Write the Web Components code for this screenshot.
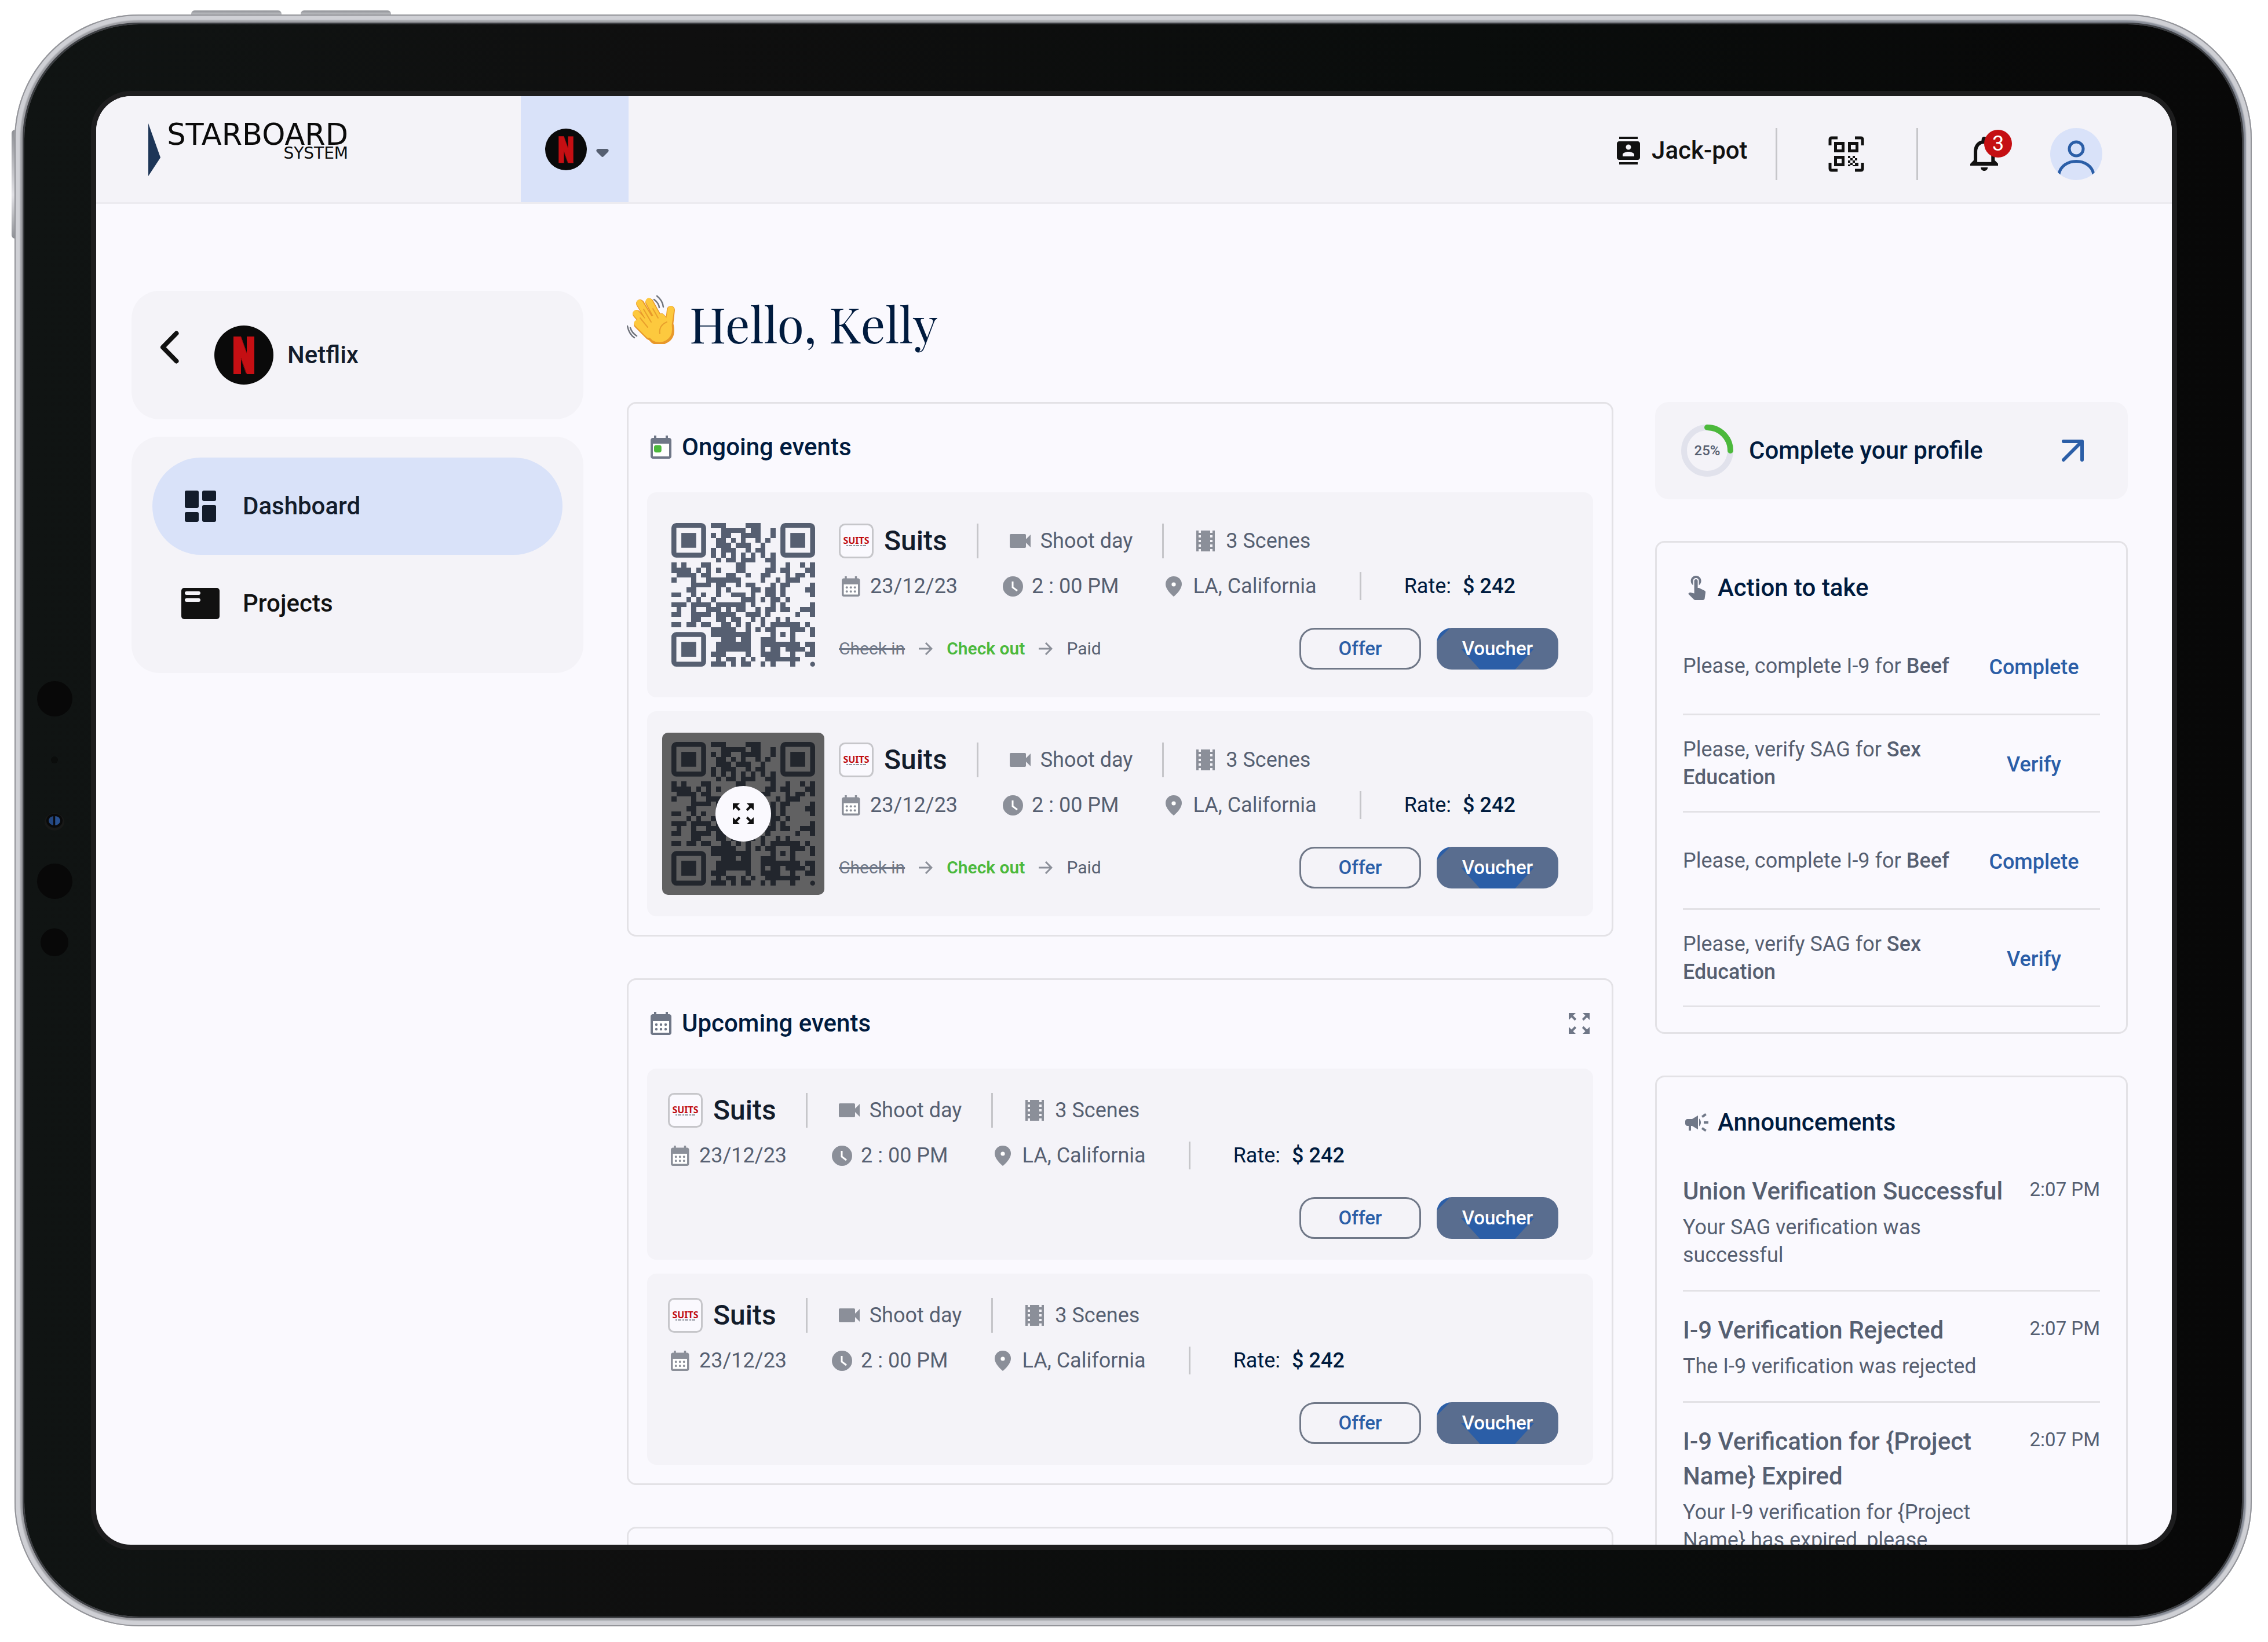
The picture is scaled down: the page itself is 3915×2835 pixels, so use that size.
<!DOCTYPE html>
<html lang="en">
<head>
<meta charset="utf-8">
<title>Starboard System - Dashboard</title>
<style>
  :root {
    --surface: #faf9fe;
    --surface-low: #f4f3f8;
    --outline: #e3e2e6;
    --divider: #c6c6ca;
    --accent: #2b5ea7;
    --accent-soft: #d9e2f9;
    --navy: #001b3e;
    --ink: #131c2b;
    --text: #565f71;
    --muted: #6f7787;
    --icon: #8b8f99;
    --green: #4cb93c;
  }
  html, body {
    height: 100%;
  }
  body {
    margin: 0;
    background: #fff;
    color: var(--text);
    font: 36px/48px Roboto, "Liberation Sans", sans-serif;
  }
</style>
</head>
<body>

<tablet-frame>
  <app-header slot="header"></app-header>
  <app-layout>
    <side-nav slot="nav"></side-nav>

    <h-greeting slot="greeting">Hello, Kelly</h-greeting>

    <app-panel slot="main" icon="today" wide>
      <span slot="title">Ongoing events</span>
      <event-card status>
        <qr-code slot="code"></qr-code>
      </event-card>
      <event-card status>
        <qr-code slot="code" covered></qr-code>
      </event-card>
    </app-panel>

    <app-panel slot="main" icon="calendar" wide expandable>
      <span slot="title">Upcoming events</span>
      <event-card></event-card>
      <event-card></event-card>
    </app-panel>

    <app-panel slot="main" wide></app-panel>

    <profile-progress slot="aside" value="25">Complete your profile</profile-progress>

    <app-panel slot="aside" icon="touch">
      <span slot="title">Action to take</span>
      <action-row action="Complete">Please, complete I-9 for <b>Beef</b></action-row>
      <action-row action="Verify">Please, verify SAG for <b>Sex Education</b></action-row>
      <action-row action="Complete">Please, complete I-9 for <b>Beef</b></action-row>
      <action-row action="Verify">Please, verify SAG for <b>Sex Education</b></action-row>
    </app-panel>

    <app-panel slot="aside" icon="campaign">
      <span slot="title">Announcements</span>
      <news-item time="2:07 PM">
        <span slot="title">Union Verification Successful</span>
        Your SAG verification was successful
      </news-item>
      <news-item time="2:07 PM">
        <span slot="title">I-9 Verification Rejected</span>
        The I-9 verification was rejected
      </news-item>
      <news-item time="2:07 PM">
        <span slot="title">I-9 Verification for {Project Name} Expired</span>
        Your I-9 verification for {Project Name} has expired, please
      </news-item>
    </app-panel>
  </app-layout>
</tablet-frame>

<script>
const calendarBody = 'M19 3h-1V1h-2v2H8V1H6v2H5c-1.1 0-2 .9-2 2v14c0 1.100.9 2 2 2h14c1.100 0 2-.9 2-2V5c0-1.100-.9-2-2-2z'

// name: [viewBox, markup]
const icons = {
  contacts: ['2 0 20 24', '<path d="M20 0H4v2h16V0zM4 24h16v-2H4v2zM20 4H4c-1.100 0-2 .9-2 2v12c0 1.100.9 2 2 2h16c1.100 0 2-.9 2-2V6c0-1.100-.9-2-2-2zm-8 2.750c1.240 0 2.250 1.010 2.250 2.250s-1.010 2.250-2.250 2.250S9.750 10.240 9.750 9 10.760 6.750 12 6.750zM17 17H7v-1.500c0-1.670 3.330-2.500 5-2.500s5 .83 5 2.500V17z"/>'],
  scan: ['0 0 62 62', '<g fill="none" stroke="currentColor" stroke-width="5"><path d="M3 16V6q0-3 3-3h10M46 3h10q3 0 3 3v10M59 46v10q0 3-3 3H46M16 59H6q-3 0-3-3V46"/><path d="M12.500 12.500h13v13h-13zM36.500 12.500h13v13h-13zM12.500 36.500h13v13h-13z"/></g><path d="M34 34h4v4h-4zM42 34h4v4h-4zM38 38h4v4h-4zM46 38h4v4h-4zM34 42h4v4h-4zM42 42h4v4h-4zM38 46h4v4h-4zM46 46h6v6h-6zM42 50h4v2h-4zM34 49h4v3h-4z"/>'],
  bell: ['4 2.500 16 19.500', '<path d="M12 22c1.100 0 2-.9 2-2h-4c0 1.100.9 2 2 2zm6-6v-5c0-3.070-1.630-5.640-4.500-6.320V4c0-.83-.67-1.500-1.500-1.500s-1.500.67-1.500 1.500v.68C7.640 5.360 6 7.920 6 11v5l-2 2v1h16v-1l-2-2zm-2 1H8v-6c0-2.480 1.510-4.500 4-4.500s4 2.020 4 4.500v6z"/>'],
  person: ['0 0 90 90', '<g fill="none" stroke="currentColor" stroke-width="5"><circle cx="45" cy="36" r="12"/><path d="M15 80C20 50 70 50 75 80"/></g>'],
  caret: ['0 0 22 14', '<path d="M3 0h16q4 1 2 5l-8 8q-2 2-4 0L1 5q-2-4 2-5z"/>'],
  back: ['0 0 33 57', '<path d="M28.500 4.500L5 28.500l23.500 24" fill="none" stroke="currentColor" stroke-width="8" stroke-linecap="round" stroke-linejoin="round"/>'],
  dashboard: ['0 0 66 54', '<rect x="6" width="24" height="30" rx="3"/><rect x="36" width="24" height="18" rx="3"/><rect x="6" y="37" width="24" height="17" rx="3"/><rect x="36" y="25" width="24" height="29" rx="3"/>'],
  projects: ['0 0 66 54', '<rect width="66" height="54" rx="5"/><path d="M9 9h21M9 21h21" stroke="#f4f3f8" stroke-width="6" stroke-linecap="round"/>'],
  today: ['3 1 18 20', `<path d="${calendarBody}"/><path fill="#fff" d="M5 8h14v11H5z"/><rect x="6" y="9.200" width="6.400" height="6.400" rx="1.800" fill="#4cb93c"/>`],
  calendar: ['3 1 18 20', `<path d="${calendarBody}"/><path fill="#fff" d="M5 9h14v10H5z"/><g><circle cx="8" cy="12" r="1.100"/><circle cx="12" cy="12" r="1.100"/><circle cx="16" cy="12" r="1.100"/><circle cx="8" cy="16" r="1.100"/><circle cx="12" cy="16" r="1.100"/><circle cx="16" cy="16" r="1.100"/></g>`],
  video: ['3 6 18 12', '<path d="M17 10.500V7c0-.55-.45-1-1-1H4c-.55 0-1 .45-1 1v10c0 .55.45 1 1 1h12c.55 0 1-.45 1-1v-3.500l4 4v-11l-4 4z"/>'],
  film: ['4 3 16 18', '<path d="M18 3v2h-2V3H8v2H6V3H4v18h2v-2h2v2h8v-2h2v2h2V3h-2zM8 17H6v-2h2v2zm0-4H6v-2h2v2zm0-4H6V7h2v2zm10 8h-2v-2h2v2zm0-4h-2v-2h2v2zm0-4h-2V7h2v2z"/>'],
  clock: ['0 0 35 35', '<circle cx="17.500" cy="17.500" r="17.500"/><path d="M17 9v10l8 6" fill="none" stroke="#fff" stroke-width="3"/>'],
  pin: ['0 0 28 35', '<path d="M14 0C6 0 0 6 0 13.500 0 24 14 35 14 35s14-11 14-21.500C28 6 22 0 14 0z"/><circle cx="14" cy="14" r="3.600" fill="#fff"/>'],
  arrow: ['0 0 24 22', '<path d="M0 11h22M12 1l10 10-10 10" fill="none" stroke="currentColor" stroke-width="3"/>'],
  open: ['0 0 38 38', '<path d="M3 3h32v32M35 3L3 35" fill="none" stroke="currentColor" stroke-width="6" stroke-linecap="round" stroke-linejoin="round"/>'],
  expand: ['3 3 18 18', '<path d="M15 3l2.300 2.300-2.890 2.870 1.420 1.420L18.700 6.700 21 9V3zM3 9l2.300-2.300 2.870 2.890 1.420-1.420L6.700 5.300 9 3H3zM9 21l-2.300-2.300 2.890-2.870-1.420-1.420L5.300 17.300 3 15v6zM21 15l-2.300 2.300-2.870-2.890-1.420 1.420 2.890 2.870L15 21h6z"/>'],
  touch: ['4.700 3 15 21', '<path d="M9 11.240V7.500C9 6.120 10.120 5 11.500 5S14 6.120 14 7.500v3.740c1.210-.81 2-2.180 2-3.740C16 5.010 13.990 3 11.500 3S7 5.010 7 7.500c0 1.560.79 2.930 2 3.740zm9.840 4.630l-4.540-2.260c-.17-.07-.35-.11-.54-.11H13v-6c0-.83-.67-1.500-1.500-1.500S10 6.670 10 7.500v10.740l-3.430-.72c-.08-.01-.15-.03-.24-.03-.31 0-.59.13-.79.33l-.79.8 4.940 4.940c.27.27.65.44 1.060.44h6.790c.75 0 1.330-.55 1.440-1.280l.75-5.270c.01-.07.02-.14.02-.2 0-.62-.38-1.160-.91-1.380z"/>'],
  campaign: ['2 4 20 16', '<path d="M18 11v2h4v-2h-4zM16 17.610c.96.71 2.210 1.650 3.200 2.390.4-.53.8-1.070 1.200-1.600-.99-.74-2.240-1.680-3.200-2.400-.4.54-.8 1.080-1.200 1.610zM20.400 5.600c-.4-.53-.8-1.070-1.200-1.600-.99.74-2.240 1.680-3.200 2.400.4.53.8 1.070 1.200 1.600.96-.72 2.210-1.650 3.200-2.400zM4 9c-1.100 0-2 .9-2 2v2c0 1.100.9 2 2 2h1v4h2v-4h1l5 3V6L8 9H4zM15.500 12c0-1.330-.58-2.530-1.500-3.350v6.690c.92-.81 1.500-2.010 1.500-3.340z"/>'],
  netflix: ['0 0 102 102', '<circle cx="51" cy="51" r="51" fill="#0a0a0a"/><g fill="#c50f13"><rect x="33" y="19" width="13" height="65"/><rect x="56" y="19" width="13" height="65"/><path d="M33 19h13l23 65H56z"/></g><path d="M46 57l9 26M46 20l10 28" stroke="#8c0a0d" stroke-width="1"/>'],
  suits: ['0 0 60 60', '<rect x="1.500" y="1.500" width="57" height="57" rx="9" fill="#faf9fe" stroke="#c6c6ca" stroke-width="3"/><text x="30" y="35" text-anchor="middle" font-family="Noto Sans" font-weight="700" font-size="16" fill="#c00b10">SUITS</text><path d="M13 38h34" stroke="#8b8f99" stroke-width="2" stroke-dasharray="3 1 6 2"/>'],
  wave: ['0 0 84 84', '<g fill="none" stroke-linecap="round"><g stroke="#e8982a" stroke-width="14"><path d="M23 14l22 36M39 12l20 36M17 32l24 28M19 50l20 20M76 25l-4 36"/></g><path d="M32 44l28-8 16 16q4 20-10 26-10 6-20 0L28 60z" fill="#e8982a" stroke="#e8982a" stroke-width="10" stroke-linejoin="round"/><g stroke="#fdc93e" stroke-width="11"><path d="M22 13l22 36M38 10l20 36M16 31l24 28M18 48l20 20M76 24l-5 34"/></g><path d="M34 43l26-7 13 16q3 16-8 22-9 5-18 0L30 58z" fill="#fdc93e" stroke="#fdc93e" stroke-width="9" stroke-linejoin="round"/><path d="M29 24l13 22M45 23l9 16M23 39l13 16M57 66q-2-14 12-20" stroke="#e9a02c" stroke-width="2"/><path d="M47 7q8 6 9 14M52 1q10 8 11 19M6 56q3 9 11 14M1 53q3 14 12 20" stroke="#70747c" stroke-width="2.500"/></g>'],
}

// dark runs of every module row, first-last column
const qrRows = [
  '8-10 15-17', '10-14 16-17 20', '8 10-11 14-17 20', '9-10 12 14 17 19', '9-11 13-15 18',
  '8 10-12 15 17-18', '8 10 12 14 16 18 20', '9 11-12 14-16 19-20', '0 2 6-7 13-14 20 23 26 28',
  '0-3 5 7 9 13-14 19-20 22-23 27-28', '1-4 6-7 11-12 15 18-19 23 25-26 28', '0 4 7-13 18 21 23-25',
  '4-7 9-10 13 15-16 20 22-23 28', '3-4 9 11 16-17 19-20 22 27-28', '0-1 4 6 9 12-14 16 19-20 22 28',
  '3 5 8 14-16 18 20-21 23', '0-2 4-7 9-14 16 20 22 28', '1 4 7-9 11 13-14 17 19-20 22-23 26-28',
  '0-1 4-7 9-12 15-17 19 25 28', '4-5 9-10 12-13 16 18 21 23', '0-1 3-4 6-7 10-11 13 15 18 20-25 27',
  '8-12 15 17 19-20 24-26 28', '8-15 20 22 24 28', '10-12 14-15 18-20 24', '9-15 18-25 27-28',
  '9-15 18 20-21 23-26 28', '8-10 15 18-21 24 27-28', '9 11-12 14 16 19-25', '8-10 12 14-15 18 20 24',
]

class UiIcon extends HTMLElement {
  constructor() {
    super()
    this.attachShadow({ mode: 'open' })
  }

  connectedCallback() {
    const [box, body] = icons[this.getAttribute('name')]
    const height = this.getAttribute('size')
    this.shadowRoot.innerHTML = `
    <style>
      :host { display: inline-flex; flex: none; align-items: center; justify-content: center; }
      svg { display: block; fill: currentColor; }
    </style>
    <svg viewBox="${box}" height="${height}" aria-hidden="true">${body}</svg>
    `
  }
}

class TabletFrame extends HTMLElement {
  constructor() {
    super()
    this.attachShadow({ mode: 'open' }).innerHTML = `
    <style>
      :host {
        display: block;
        box-sizing: border-box;
        height: 100vh;
        padding: 25px 28px 27px 25px;
        position: relative;
        overflow: hidden;
      }
      .key {
        position: absolute;
        background: linear-gradient(#8e9095, #e0e0e4 60%, #8e9095);
        border-radius: 6px;
      }
      .key.top { top: 18px; width: 156px; height: 20px; }
      .key.first { left: 330px; }
      .key.second { left: 519px; }
      .key.side { left: 20px; top: 224px; width: 20px; height: 188px; }
      .metal {
        position: relative;
        box-sizing: border-box;
        height: 100%;
        padding: 17px;
        border-radius: 215px;
        background: linear-gradient(90deg, #9c9da2, #a8aaae 50%, #868b96);
        box-shadow: inset 0 0 0 2px #939499, inset 0 0 2px 10px #cfd0d5;
      }
      .bezel {
        position: relative;
        box-sizing: border-box;
        height: 100%;
        padding: 124px;
        padding-right: 121px;
        border-radius: 198px;
        background: linear-gradient(90deg, #101413, #0f0f0f 30%, #0a0d0c 65%, #080808);
        box-shadow: 0 0 0 3px #3c3e42;
      }
      .screen {
        height: 100%;
        overflow: hidden;
        border-radius: 60px;
        background: var(--surface);
        box-shadow: 0 0 0 9px #1d1d1e;
      }
      /* sensor strip, centred on the short side */
      .sensors {
        position: absolute;
        left: 20px;
        top: 0;
        bottom: 0;
        width: 64px;
        display: grid;
        grid-auto-rows: 105px;
        align-content: center;
        place-items: center;
      }
      .sensors i { border-radius: 50%; background: #080808; width: 61px; height: 61px; }
      .sensors .mic { width: 12px; height: 12px; background: #0b0d0c; }
      .sensors .small { width: 48px; height: 48px; }
      .sensors .lens {
        width: 20px;
        height: 16px;
        background: linear-gradient(90deg, #23467f 40%, #0a0a0f 42% 56%, #28508f 58%);
        box-shadow: 0 0 0 4px #0a0a0a, 0 2px 0 7px #181918;
      }
    </style>
    <div class="key top first"></div>
    <div class="key top second"></div>
    <div class="key side"></div>
    <div class="metal">
      <div class="bezel">
        <div class="sensors"><i></i><i class="mic"></i><i class="lens"></i><i></i><i class="small"></i></div>
        <div class="screen"><slot name="header"></slot><slot></slot></div>
      </div>
    </div>
    `
  }
}

class AppHeader extends HTMLElement {
  constructor() {
    super()
    this.attachShadow({ mode: 'open' }).innerHTML = `
    <style>
      :host {
        display: flex;
        height: 183px;
        background: var(--surface-low);
        border-bottom: 3px solid #ecebf0;
        color: #111;
      }
      button { border: 0; padding: 0; background: none; color: inherit; font: inherit; display: flex; }
      .logo { display: block; width: 643px; padding: 32px 0 0 90px; }
      .logo svg { display: block; }
      .tenant { align-items: center; gap: 16px; padding: 0 34px 0 42px; background: var(--accent-soft); }
      .tenant .caret { color: var(--text); padding-top: 12px; }
      .tools { display: flex; align-items: center; margin-left: auto; padding: 16px 120px 0 0; }
      a { display: flex; align-items: center; gap: 20px; padding-bottom: 12px; color: inherit; text-decoration: none; font-weight: 500; font-size: 42px; }
      hr { width: 3px; height: 90px; margin: 0; border: 0; background: var(--divider); }
      .tools a { margin-right: 48px; }
      .scan { margin: 0 90px 0 88px; }
      .bell { position: relative; margin: 0 90px; }
      .badge {
        position: absolute;
        right: -24px;
        top: -12px;
        width: 48px;
        height: 48px;
        border-radius: 50%;
        background: #c50f13;
        color: #fff;
        font-size: 36px;
        text-align: center;
      }
      .avatar { border-radius: 50%; background: var(--accent-soft); color: var(--accent); overflow: hidden; }
    </style>
    <div class="logo">
      <svg width="350" height="107" viewBox="0 -15 350 107" role="img" aria-label="Starboard System">
        <path d="M0 0l21 59L0 91z" fill="#1d3557"/>
        <g font-family="DejaVu Sans" fill="#0b0b0b" text-anchor="end">
          <text x="345" y="37" font-size="51">STARBOARD</text>
          <text x="345" y="61" font-size="28">SYSTEM</text>
        </g>
      </svg>
    </div>
    <button class="tenant" aria-label="Switch company">
      <ui-icon name="netflix" size="72"></ui-icon>
      <ui-icon class="caret" name="caret" size="14"></ui-icon>
    </button>
    <div class="tools">
      <a href="#"><ui-icon name="contacts" size="48"></ui-icon>Jack-pot</a>
      <hr>
      <button class="scan" aria-label="Scan code"><ui-icon name="scan" size="62"></ui-icon></button>
      <hr>
      <button class="bell" aria-label="Notifications"><ui-icon name="bell" size="59"></ui-icon><span class="badge">3</span></button>
      <button class="avatar" aria-label="Account"><ui-icon name="person" size="90"></ui-icon></button>
    </div>
    `
  }
}

class AppLayout extends HTMLElement {
  constructor() {
    super()
    this.attachShadow({ mode: 'open' }).innerHTML = `
    <style>
      :host {
        display: grid;
        grid-template-columns: 780px 1fr;
        column-gap: 75px;
        padding: 150px 76px 0 61px;
      }
      .columns { display: grid; grid-template-columns: 1fr 816px; column-gap: 72px; align-items: start; }
      .stack { display: grid; gap: 72px; }
    </style>
    <slot name="nav"></slot>
    <main>
      <slot name="greeting"></slot>
      <div class="columns">
        <div class="stack"><slot name="main"></slot></div>
        <div class="stack"><slot name="aside"></slot></div>
      </div>
    </main>
    `
  }
}

class SideNav extends HTMLElement {
  constructor() {
    super()
    this.attachShadow({ mode: 'open' }).innerHTML = `
    <style>
      :host { display: block; color: var(--ink); font-size: 42px; font-weight: 500; }
      .card { display: flex; border-radius: 48px; background: var(--surface-low); }
      .company { align-items: center; height: 222px; padding-left: 49px; margin-bottom: 30px; }
      button { border: 0; padding: 0 0 24px; margin-right: 61px; background: none; color: #111; }
      .company span { margin-left: 24px; }
      nav { flex-direction: column; padding: 36px; }
      a {
        display: flex;
        align-items: center;
        gap: 40px;
        height: 168px;
        padding-left: 50px;
        border-radius: 84px;
        color: #111;
        text-decoration: none;
      }
      a[aria-current] { background: var(--accent-soft); color: var(--ink); }
    </style>
    <div class="card company">
      <button aria-label="Back"><ui-icon name="back" size="57"></ui-icon></button>
      <ui-icon name="netflix" size="102"></ui-icon>
      <span>Netflix</span>
    </div>
    <nav class="card">
      <a href="#" aria-current="page"><ui-icon name="dashboard" size="54"></ui-icon>Dashboard</a>
      <a href="#"><ui-icon name="projects" size="54"></ui-icon>Projects</a>
    </nav>
    `
  }
}

class Greeting extends HTMLElement {
  constructor() {
    super()
    this.attachShadow({ mode: 'open' }).innerHTML = `
    <style>
      :host { display: block; margin-bottom: 80px; }
      h1 {
        display: flex;
        align-items: flex-start;
        gap: 24px;
        margin: 0;
        color: var(--navy);
        font: 400 84px/112px "Playfair Display", "Liberation Serif", serif;
      }
      ui-icon { padding-top: 8px; }
    </style>
    <h1><ui-icon name="wave" size="84"></ui-icon><slot></slot></h1>
    `
  }
}

class AppPanel extends HTMLElement {
  constructor() {
    super()
    this.attachShadow({ mode: 'open' })
  }

  connectedCallback() {
    const icon = this.getAttribute('icon')
    const sizes = { today: 40, calendar: 40, touch: 42, campaign: 32 }
    this.shadowRoot.innerHTML = `
    <style>
      :host {
        display: block;
        padding: 0 45px 43px;
        border: 3px solid var(--outline);
        border-radius: 16px;
      }
      :host([wide]) { padding: 0 32px 32px; }
      header { display: flex; align-items: center; height: 104px; padding-top: 26px; }
      :host([wide]) header { height: 150px; padding: 0 0 3px; }
      header > ui-icon { width: 48px; margin-right: 12px; color: var(--muted); }
      h2 { margin: 0; color: var(--navy); font-size: 42px; font-weight: 500; }
      button { display: flex; margin: 0 6px 0 auto; padding: 0; border: 0; background: none; color: var(--muted); }
      .body { display: grid; gap: 0; }
      :host([wide]) .body { gap: 24px; }
    </style>
    <header>
      ${icon ? `<ui-icon name="${icon}" size="${sizes[icon]}"></ui-icon><h2><slot name="title"></slot></h2>` : ''}
      ${this.hasAttribute('expandable') ? '<button aria-label="Expand"><ui-icon name="expand" size="36"></ui-icon></button>' : ''}
    </header>
    <div class="body"><slot></slot></div>
    `
  }
}

class QrCode extends HTMLElement {
  constructor() {
    super()
    this.attachShadow({ mode: 'open' })
  }

  connectedCallback() {
    let d = ''
    qrRows.forEach((row, y) => {
      for (const run of row.split(' ')) {
        const [from, to = from] = run.split('-').map(Number)
        d += `M${from} ${y}h${to - from + 1}v1H${from}z`
      }
    })
    const finder = (x, y) => `
      <rect x="${x + 0.5}" y="${y + 0.5}" width="6" height="6" rx=".5" fill="none" stroke="currentColor"/>
      <rect x="${x + 2}" y="${y + 2}" width="3" height="3"/>`

    this.shadowRoot.innerHTML = `
    <style>
      :host {
        position: relative;
        display: block;
        box-sizing: border-box;
        width: 280px;
        height: 280px;
        padding: 16px;
        border-radius: 10px;
        color: var(--text);
      }
      :host([covered]) { background: #616162; color: #22262d; }
      svg { display: block; fill: currentColor; }
      button {
        position: absolute;
        inset: 92px;
        display: grid;
        place-items: center;
        padding: 0;
        border: 0;
        border-radius: 50%;
        background: var(--surface);
        color: #111;
      }
    </style>
    <svg viewBox="0 0 29 29" width="248" height="248" role="img" aria-label="Check-in code">
      <path d="${d}" shape-rendering="crispEdges"/>
      ${finder(0, 0)}${finder(22, 0)}${finder(0, 22)}
      <circle cx="28.500" cy="28.500" r=".5"/>
    </svg>
    ${this.hasAttribute('covered') ? '<button aria-label="Enlarge code"><ui-icon name="expand" size="36"></ui-icon></button>' : ''}
    `
  }
}

class EventCard extends HTMLElement {
  constructor() {
    super()
    this.attachShadow({ mode: 'open' })
  }

  connectedCallback() {
    const status = this.hasAttribute('status')
    this.shadowRoot.innerHTML = `
    <style>
      :host {
        display: flex;
        padding: 42px 60px 36px 36px;
        border-radius: 16px;
        background: var(--surface-low);
      }
      :host([status]) { padding: 37px 60px 37px 26px; gap: 25px; }
      .details { flex: 1; }
      :host([status]) .details { padding: 17px 0 11px; }
      .row { display: flex; align-items: center; }
      .row + .row { margin-top: 24px; }
      .first { gap: 51px; height: 60px; }
      .second { gap: 74px; height: 48px; }
      .details .third { margin-top: 48px; height: 72px; gap: 24px; font-size: 30px; }
      .meta { display: flex; align-items: center; gap: 12px; white-space: nowrap; }
      .first .meta { gap: 14px; }
      .meta ui-icon { width: 42px; color: var(--icon); }
      h3 { display: flex; align-items: center; gap: 18px; margin: 0; color: var(--ink); font-size: 48px; font-weight: 500; }
      hr { width: 3px; height: 60px; margin: 0; border: 0; background: var(--divider); }
      .second hr { height: 48px; }
      .rate { display: flex; gap: 20px; color: var(--navy); }
      .rate b { font-weight: 500; }
      s { color: var(--muted); }
      .now { color: var(--green); font-weight: 600; }
      .third ui-icon { color: var(--icon); }
      .buttons { display: flex; gap: 27px; margin-left: auto; }
      button {
        box-sizing: border-box;
        width: 210px;
        height: 72px;
        padding: 0;
        border: 3px solid var(--muted);
        border-radius: 26px;
        background: none;
        color: var(--accent);
        font: 500 33px/48px Roboto, sans-serif;
      }
      .filled {
        position: relative;
        border: 0;
        background: linear-gradient(135deg, var(--accent) 16px, #596d8f 17px);
        color: #fff;
        overflow: hidden;
        z-index: 0;
      }
      .filled::before {
        content: "";
        position: absolute;
        z-index: -1;
        inset: 36px 42px 0;
        background: var(--accent);
        clip-path: polygon(0 0, 100% 0, 74% 100%, 26% 100%);
      }
    </style>
    <slot name="code"></slot>
    <div class="details">
      <div class="row first">
        <h3><ui-icon name="suits" size="60"></ui-icon>Suits</h3>
        <hr>
        <span class="meta"><ui-icon name="video" size="24"></ui-icon>Shoot day</span>
        <hr>
        <span class="meta"><ui-icon name="film" size="36"></ui-icon>3 Scenes</span>
      </div>
      <div class="row second">
        <span class="meta"><ui-icon name="calendar" size="35"></ui-icon>23/12/23</span>
        <span class="meta"><ui-icon name="clock" size="35"></ui-icon>2 : 00 PM</span>
        <span class="meta"><ui-icon name="pin" size="35"></ui-icon>LA, California</span>
        <hr>
        <span class="rate"><span>Rate:</span><b>$ 242</b></span>
      </div>
      <div class="row third">
        ${status ? `<s>Check in</s><ui-icon name="arrow" size="22"></ui-icon>
        <span class="now">Check out</span><ui-icon name="arrow" size="22"></ui-icon><span>Paid</span>` : ''}
        <div class="buttons"><button>Offer</button><button class="filled">Voucher</button></div>
      </div>
    </div>
    `
  }
}

class ProfileProgress extends HTMLElement {
  constructor() {
    super()
    this.attachShadow({ mode: 'open' })
  }

  connectedCallback() {
    const value = this.getAttribute('value')
    this.shadowRoot.innerHTML = `
    <style>
      :host { display: block; border-radius: 24px; background: var(--surface-low); }
      a {
        display: flex;
        align-items: center;
        height: 168px;
        padding: 0 76px 0 45px;
        color: var(--navy);
        font-size: 42px;
        font-weight: 500;
        text-decoration: none;
      }
      .ring { display: grid; place-items: center; margin-right: 27px; color: var(--text); font-size: 24px; }
      .ring > * { grid-area: 1 / 1; }
      circle { fill: none; stroke-width: 10; }
      ui-icon { margin-left: auto; color: var(--accent); }
    </style>
    <a href="#">
      <span class="ring">
        <svg width="90" height="90" viewBox="0 0 90 90">
          <circle cx="45" cy="45" r="40" stroke="#e1e2ec"/>
          <circle cx="45" cy="45" r="40" stroke="#4cb93c" stroke-linecap="round" pathLength="100" stroke-dasharray="${value} 100" transform="rotate(-90 45 45)"/>
        </svg>
        <span>${value}%</span>
      </span>
      <slot></slot>
      <ui-icon name="open" size="38"></ui-icon>
    </a>
    `
  }
}

class ActionRow extends HTMLElement {
  constructor() {
    super()
    this.attachShadow({ mode: 'open' })
  }

  connectedCallback() {
    this.shadowRoot.innerHTML = `
    <style>
      :host {
        display: grid;
        grid-template-columns: 1fr 228px;
        align-items: center;
        height: 165px;
        border-bottom: 3px solid var(--outline);
      }
      ::slotted(b) { font-weight: 500; }
      button { border: 0; padding: 4px 0 0; background: none; color: var(--accent); font: inherit; font-weight: 500; }
    </style>
    <span><slot></slot></span>
    <button>${this.getAttribute('action')}</button>
    `
  }
}

class NewsItem extends HTMLElement {
  constructor() {
    super()
    this.attachShadow({ mode: 'open' })
  }

  connectedCallback() {
    this.shadowRoot.innerHTML = `
    <style>
      :host {
        display: grid;
        grid-template-columns: 1fr auto;
        column-gap: 36px;
        padding: 37px 0 36px;
        border-bottom: 3px solid var(--outline);
      }
      h3 { margin: 0 0 8px; font-size: 42px; line-height: 60px; font-weight: 500; }
      p { margin: 0; }
      time { font-size: 33px; line-height: 54px; }
    </style>
    <div>
      <h3><slot name="title"></slot></h3>
      <p><slot></slot></p>
    </div>
    <time>${this.getAttribute('time')}</time>
    `
  }
}

customElements.define('ui-icon', UiIcon)
customElements.define('tablet-frame', TabletFrame)
customElements.define('app-header', AppHeader)
customElements.define('app-layout', AppLayout)
customElements.define('side-nav', SideNav)
customElements.define('h-greeting', Greeting)
customElements.define('app-panel', AppPanel)
customElements.define('qr-code', QrCode)
customElements.define('event-card', EventCard)
customElements.define('profile-progress', ProfileProgress)
customElements.define('action-row', ActionRow)
customElements.define('news-item', NewsItem)
</script>
</body>
</html>
